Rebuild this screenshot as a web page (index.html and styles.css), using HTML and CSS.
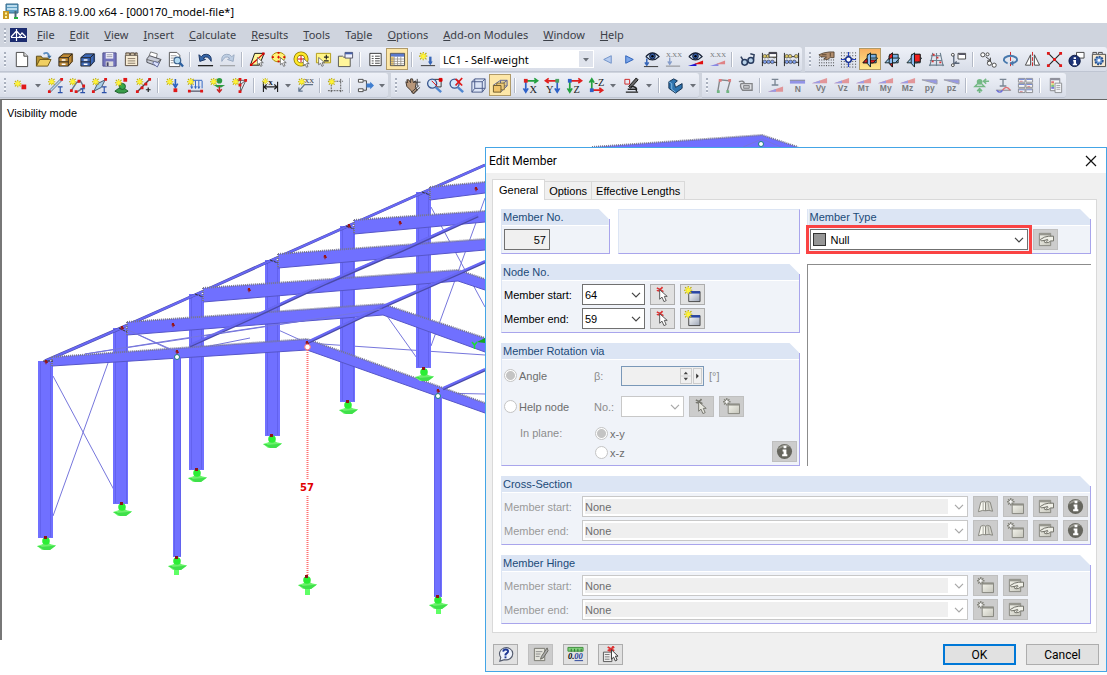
FILE: index.html
```
<!DOCTYPE html>
<html lang="en">
<head>
<meta charset="utf-8">
<title>RSTAB 8.19.00 x64 - [000170_model-file*]</title>
<link rel="stylesheet" href="styles.css">
</head>
<body>
<svg class="defs" aria-hidden="true">
  <defs>
    <linearGradient id="gsteel" x1="0" y1="0" x2="1" y2="1"><stop offset="0" stop-color="#fff"/><stop offset="1" stop-color="#9aa3b5"/></linearGradient>
    <linearGradient id="gpaper" x1="0" y1="0" x2="1" y2="1"><stop offset="0" stop-color="#f6f6ee"/><stop offset="1" stop-color="#c4c4ba"/></linearGradient>
    <symbol id="star" viewBox="0 0 8 8"><path d="M4 0v8M0 4h8M1 1l6 6M7 1L1 7" stroke="#b8a800" stroke-width="1.1"/><path d="M4 1v6M1 4h6M2 2l4 4M6 2L2 6" stroke="#fff43a" stroke-width="1.1"/></symbol>
    <symbol id="cursor" viewBox="0 0 10 14"><path d="M1 1v10l2.6-2.2L5.4 13l2-.9-1.800-4H9z" fill="#fff" stroke="#555"/></symbol>
    <symbol id="down" viewBox="0 0 8 8"><path d="M1 3h6L4 6.400z" fill="#6b7078"/></symbol>
    <symbol id="chev" viewBox="0 0 10 6"><path d="M1 .8l4 4 4-4" fill="none" stroke="currentColor" stroke-width="1.2"/></symbol>
    <symbol id="cabinet" viewBox="0 0 18 18"><path d="M2 7l5-5h10l-4 5z" fill="#fff" fill-opacity=".35"/><path d="M2 7h10v9H2zM2 7l5-4h9l-4 4M12 7l4-4v8l-4 5" stroke="#222" stroke-width=".9"/><path d="M2 11.500h10" stroke="#222"/><path d="M5 9.500h4M5 14h4" stroke="#fff" stroke-width="1.4"/></symbol>
    <symbol id="pick" viewBox="0 0 18 18"><path d="M3 2l7 4M9 1L5 6M3 5l6-3" stroke="#d33" stroke-width="1.700"/><path d="M6 4v10l2.500-2.200L10.500 16.500l2.400-1-2-4.500H14z" fill="#fff" stroke="#555"/></symbol>
    <symbol id="newwin" viewBox="0 0 18 18"><path d="M5 6h12v10.500H5z" fill="url(#gsteel)" stroke="#444"/><path d="M5 5.500h12v2.500H5z" fill="#2745a8"/><use href="#star" x="0" y="0" width="9" height="9"/></symbol>
    <symbol id="pick-off" viewBox="0 0 18 18"><path d="M3 2l7 4M9 1L5 6M3 5l6-3" stroke="#77776f" stroke-width="1.600"/><path d="M6 4v10l2.500-2.200L10.500 16.500l2.400-1-2-4.500H14z" fill="#e8e8e0" stroke="#74746c"/></symbol>
    <symbol id="newwin-off" viewBox="0 0 18 18"><path d="M5.500 6.500h12v10h-12z" fill="url(#gpaper)" stroke="#84847c"/><path d="M5 7h13" stroke="#909088" stroke-width="2"/><path d="M4 0v8M0 4h8M1.200 1.200l5.600 5.600M6.800 1.200L1.200 6.800" stroke="#85857d" stroke-width="1.500"/><path d="M4 2v4M2 4h4" stroke="#fff" stroke-width="1.300"/></symbol>
    <symbol id="editwin-off" viewBox="0 0 18 18"><path d="M2.500 2.500h12v13h-12z" fill="url(#gpaper)" stroke="#85857d"/><path d="M2.500 3.500h12" stroke="#96968e" stroke-width="2.200"/><path d="M17.500 5.500h-5L8 6.500 3.500 9l1 1.500 4-.7-1 1.700 2 1 3-.5 2-1.500h3z" fill="#f0f0e8" stroke="#6c6c64"/><path d="M8.500 9.800l3-1M9.500 11l2.500-1" stroke="#6c6c64" fill="none"/></symbol>
    <symbol id="book-off" viewBox="0 0 18 18"><path d="M1.500 14.500L4 4.500q3-2 5 0v9q-3-1-7.500 1z" fill="#fafaf2" stroke="#84847c"/><path d="M9 13.500v-9q2-2 5 0l2.500 9.500q-4-1.500-7.500-.5z" fill="#d6d6ce" stroke="#84847c"/><path d="M6.500 4v9M11.500 4l1.500 9" stroke="#a4a49c"/></symbol>
    <symbol id="info-off" viewBox="0 0 18 18"><circle cx="9" cy="9" r="8" fill="#66665e"/><path d="M2 7a8 8 0 0 1 13-3q-7-1-13 3" fill="#9a9a92"/><path d="M8 3h3v2.500H8zM7 7h4v5h1v2H6.500v-2H8V9H7z" fill="#fff"/></symbol>
    <symbol id="eye" viewBox="0 0 18 18"><path d="M2 6q7-8 14 0-7 7-14 0" fill="#cfe2f6" stroke="#172034" stroke-width="1.300"/><circle cx="9" cy="5.500" r="3" fill="#3560ae" stroke="#101a33"/><circle cx="9" cy="5.500" r="1.300"/></symbol>
    <symbol id="diag" viewBox="0 0 18 18"><path d="M1 6.500h16V1z" fill="#e06060"/><path d="M1 6.500h8.500V3.700z" fill="#6a6ae0"/></symbol>
    <symbol id="diag2" viewBox="0 0 18 18"><path d="M1 2h16v4.500z" fill="#6262e0" stroke="#70707a"/></symbol>
    <symbol id="planes" viewBox="0 0 18 18"><path d="M6 3.500h9v9H6z" fill="#79ade0" stroke="#122"/><path d="M1 12.500l4.500-5h11l-4.500 5z" fill="#9cc8f0" stroke="#122"/><path d="M9 2v15l-3.500-4V5z" fill="#8cbcf0" stroke="#122"/></symbol>
    <symbol id="abacus" viewBox="0 0 18 18"><path d="M1.500 2v14M16.500 2v14M1 6h16M1 12h16" stroke="#222"/><g stroke="#333" stroke-width=".6"><g fill="#dcc96a"><circle cx="4" cy="5.500" r="1.900"/><circle cx="7.500" cy="5.500" r="1.900"/><circle cx="14" cy="5.500" r="1.900"/></g><g fill="#7d9dec"><circle cx="4" cy="11.500" r="1.900"/><circle cx="8" cy="11.500" r="1.900"/><circle cx="12" cy="11.500" r="1.900"/></g></g></symbol>
    <g id="support"><path d="M-9 4L0 1l10 2.500L4 8h-8z" fill="#7dff7d"/><path d="M-9 4l7 4h6l6-4.500z" fill="#3fe04a"/><path d="M-5 5L-2 0h4l4 4z" fill="#6bf06b"/><circle cy="-1" r="3.800" fill="#2bee34"/><path d="M-2-6h3v3h-3z" fill="#8d1515"/></g>
    <path id="node" d="M-1-2h2v1.500h.8v1.500h-1.300v1.200h-1v-1.700h-1z" fill="#981515"/>
  </defs>
</svg>

<header class="titlebar">
  <svg class="app-icon" viewBox="0 0 17 17"><path d="M4 1h12v9H4z" fill="#5f9fc4" stroke="#376b8b"/><path d="M5 3h10M5 6h10" stroke="#d9f1fc" stroke-width="1.500"/><path d="M13.500 8v6" stroke="#486875" stroke-width="2"/><path d="M12 14h4v2h-4z" fill="#27b13e"/><path d="M1 8h6v8H1z" fill="#c99a23"/><path d="M3 9.500h2v2H3zM3 13h2v2H3z" fill="#fff4a0"/></svg>
  <h1>RSTAB 8.19.00 x64 - [000170_model-file*]</h1>
</header>

<nav class="menubar" aria-label="Main menu">
  <span class="grip"></span>
  <svg class="menu-logo" viewBox="0 0 17 14"><path d="M0 0h17v14H0z" fill="#1d2d70"/><path d="M1 9.500h15M6.500 1v12M1 9l5.500-6L12 9M9 9l3-4 4 4" stroke="#fff" stroke-width="1.200" fill="none"/></svg>
  <button><u>F</u>ile</button><button><u>E</u>dit</button><button><u>V</u>iew</button><button><u>I</u>nsert</button><button><u>C</u>alculate</button><button><u>R</u>esults</button><button><u>T</u>ools</button><button>Ta<u>b</u>le</button><button><u>O</u>ptions</button><button><u>A</u>dd-on Modules</button><button><u>W</u>indow</button><button><u>H</u>elp</button>
</nav>

<div class="toolrow">
  <div class="toolbar" role="toolbar" aria-label="Standard">
    <span class="grip"></span>
    <button class="tb" aria-label="New"><svg viewBox="0 0 18 18"><path d="M3.500 1.500h8l4 4v11h-12z" fill="#fff" stroke="#444"/><path d="M11.500 1.500v4h4" fill="#ddd" stroke="#444"/></svg></button>
    <button class="tb" aria-label="Open"><svg viewBox="0 0 18 18"><path d="M1.500 16V5.500h5l1.500 2h6V10" fill="#b89433" stroke="#5c4a14"/><path d="M1.500 16l3.500-7h12l-3.500 7z" fill="#f0cf62" stroke="#6b5415"/><path d="M9 3q5-3 6 3" fill="none" stroke="#5c8ec0" stroke-width="2"/><path d="M13 5h4.500L15 8.500z" fill="#3d6ea0"/></svg></button>
    <button class="tb" aria-label="Project manager"><svg viewBox="0 0 18 18" fill="#c08a34"><path d="M2 7l4-4h11v8l-5 5H2z"/><use href="#cabinet"/></svg></button>
    <button class="tb" aria-label="Block manager"><svg viewBox="0 0 18 18" fill="#3c68b8"><path d="M2 7l4-4h11v8l-5 5H2z"/><use href="#cabinet"/></svg></button>
    <button class="tb" aria-label="Save"><svg viewBox="0 0 18 18"><path d="M2 2h14v14H2z" fill="#7374bd" stroke="#50508a"/><path d="M5 2h8v6H5z" fill="#f4f4fa"/><path d="M6 4h6M6 6h6" stroke="#99a"/><path d="M5 11h8v5H5z" fill="#ddd"/><path d="M6 12h2v4H6z" fill="#446"/></svg></button>
    <button class="tb" aria-label="Report"><svg viewBox="0 0 18 18"><path d="M2.500 4.500h13v11h-13z" fill="#f7ecd5" stroke="#54483c"/><path d="M3 4V2h4v2h1V2h4v2h1V2h2v2" fill="#ccb99b" stroke="#54483c"/><path d="M5 8h8M5 10.500h8M5 13h8" stroke="#887a68"/></svg></button>
    <button class="tb" aria-label="Print"><svg viewBox="0 0 18 18"><path d="M4 6l2-5 7 2-1 5z" fill="#fff" stroke="#777"/><path d="M2 8l3-3 12 4-4 7-11-4z" fill="#c9cdd8" stroke="#4b4d55"/><path d="M2 9l11 3 4-3" fill="none" stroke="#666"/><path d="M8 13l2-2 5 2-2 4z" fill="#d9dffc" stroke="#6670a0"/></svg></button>
    <button class="tb" aria-label="Print preview"><svg viewBox="0 0 18 18"><path d="M2.500 1.500h8l3 3v12h-11z" fill="#fff" stroke="#555"/><path d="M4 5h6M4 7.500h6M4 10h3M4 12.500h3" stroke="#999"/><circle cx="11" cy="10" r="3.500" fill="#b4dcf2" stroke="#3e638c" stroke-width="1.300"/><path d="M13.500 12.500l3.500 4" stroke="#2b5fa0" stroke-width="2.400"/></svg></button>
    <span class="sep"></span>
    <button class="tb" aria-label="Undo"><svg viewBox="0 0 18 18"><path d="M2 4l1 7 6-2-2.500-1.200Q11 3.500 15 11q1-7-5-7.500Q6.500 3 4.500 6z" fill="#3767a8" stroke="#1c3562"/><path d="M1 15.500h16" stroke="#222" stroke-width="1.400"/></svg></button>
    <button class="tb" aria-label="Redo"><svg viewBox="0 0 18 18" opacity=".55"><path d="M16 4l-1 7-6-2 2.500-1.200Q7 3.500 3 11q-1-7 5-7.500 3.500-.5 5.500 2.500z" fill="#9fb9d8" stroke="#5e789b"/><path d="M1 15.500h16" stroke="#777" stroke-width="1.400"/></svg></button>
    <span class="sep"></span>
    <button class="tb" aria-label="Select by parallelogram"><svg viewBox="0 0 18 18"><path d="M6 2.500h10L11 15H1.500z" fill="#fff79a" stroke="#111"/><path d="M2 15L15 3" stroke="#d60000" stroke-width="1.300"/><path d="M1 13.500h2.500v2.500H1zM14 1.500h2.500V4H14z" fill="#d60000"/><use href="#cursor" x="8" y="6" width="8" height="11"/></svg></button>
    <button class="tb" aria-label="Select by ellipse"><svg viewBox="0 0 18 18"><ellipse cx="8" cy="6.500" rx="7" ry="5" fill="#fff27a" stroke="#a88c00"/><path d="M8 1v2M8 10v2M1 6.500h2M13 6.500h2" stroke="#d00" stroke-width="2"/><path d="M8 5v3M6.500 6.500h3" stroke="#d00"/><use href="#cursor" x="9" y="6" width="8" height="11"/></svg></button>
    <button class="tb" aria-label="Select by ring"><svg viewBox="0 0 18 18"><circle cx="8.500" cy="8.500" r="5.800" fill="#fff" stroke="#927d00" stroke-width="4.400"/><circle cx="8.500" cy="8.500" r="5.800" fill="none" stroke="#ffe92a" stroke-width="2.600"/><path d="M8.500 5v7M5 8.500h7" stroke="#d00"/><use href="#cursor" x="10" y="7" width="8" height="11"/></svg></button>
    <button class="tb" aria-label="Add to selection"><svg viewBox="0 0 18 18"><path d="M1.500 2.500h15v10h-15z" fill="#fff587" stroke="#b49b15"/><path d="M12 4v5M9.500 6.500h5M9.500 10.500h5" stroke="#222" stroke-width="1.200"/><use href="#cursor" x="3" y="6" width="8" height="11"/></svg></button>
    <button class="tb" aria-label="Visibilities"><svg viewBox="0 0 18 18"><path d="M1.500 16.500v-11H6l1 1h7v10z" fill="#fff59a" stroke="#555"/><path d="M8.500 1.500h8v6h-8z" fill="#eef1ff" stroke="#556"/><path d="M8.500 2.500h8" stroke="#4560a8" stroke-width="2"/></svg></button>
    <span class="sep"></span>
    <button class="tb" aria-label="Tables"><svg viewBox="0 0 18 18"><path d="M3 2.500h12v13H3z" fill="#fff" stroke="#333"/><path d="M5 5.500h2M5 8h2M5 10.500h2M5 13h2M8.500 5.500h5M8.500 8h5M8.500 10.500h5M8.500 13h5" stroke="#444"/></svg></button>
    <button class="tb on" aria-label="Table view"><svg viewBox="0 0 18 18"><path d="M1.500 2.500h15v13h-15z" fill="#fff" stroke="#444"/><path d="M2 3h14v3H2z" fill="#5b79cc"/><path d="M2 6h3v9H2z" fill="#edc86a"/><path d="M2 8.500h14M2 11h14M2 13.500h14M5.500 6v9M9 6v9M12.500 6v9" stroke="#918a82" stroke-width=".8"/></svg></button>
    <span class="sep"></span>
    <button class="tb" aria-label="New load case"><svg viewBox="0 0 18 18"><use href="#star" x="0" y="1" width="9" height="9"/><path d="M12 6v7" stroke="#3565b8" stroke-width="2.500"/><path d="M9.500 11h5L12 15z" fill="#3565b8"/><path d="M2 15.500h15" stroke="#333"/></svg></button>
    <span class="picker lc"><select aria-label="Load case"><option>LC1 - Self-weight</option></select><span class="lc-arrow"><svg viewBox="0 0 8 8"><use href="#down"/></svg></span></span>
    <button class="tb" aria-label="Previous load case"><svg viewBox="0 0 18 18"><path d="M13 5v8L5 9z" fill="#b6ccf0" stroke="#6e90c8"/></svg></button>
    <button class="tb" aria-label="Next load case"><svg viewBox="0 0 18 18"><path d="M5 5v8l8-4z" fill="#7aa6ea" stroke="#2b5fb8"/></svg></button>
    <button class="tb" aria-label="Show loads"><svg viewBox="0 0 18 18"><use href="#eye" x="1"/><path d="M4 8v6M2 12l2 3 2-3" stroke="#3565b8" stroke-width="1.600" fill="none"/><path d="M1 16.500h15" stroke="#333"/></svg></button>
    <button class="tb" aria-label="Show load values"><svg viewBox="0 0 18 18" opacity=".65"><text class="mini" x="1" y="6">X.XX</text><path d="M5 7v6M3 11l2 3 2-3" stroke="#5577b8" stroke-width="1.400" fill="none"/><path d="M1 16h15" stroke="#555"/></svg></button>
    <button class="tb" aria-label="Show results"><svg viewBox="0 0 18 18"><use href="#eye"/><path d="M1 16h9v-3z" fill="#1616d8"/><path d="M7 14l10-4v4z" fill="#e01010"/></svg></button>
    <button class="tb" aria-label="Show result values"><svg viewBox="0 0 18 18" opacity=".65"><text class="mini" x="1" y="6">X.XX</text><path d="M1 16h9v-3z" fill="#5a5ae0"/><path d="M7 14l10-4v4z" fill="#e05050"/></svg></button>
    <span class="sep"></span>
    <button class="tb" aria-label="Glasses"><svg viewBox="0 0 18 18"><path d="M2 6q2 4 4 5M12 3l4 1-1 7" stroke="#30405e" stroke-width="1.600" fill="none"/><circle cx="6" cy="12" r="3" fill="#b7d1e8" stroke="#273a5e" stroke-width="1.600"/><circle cx="12.500" cy="10" r="3" fill="#b7d1e8" stroke="#273a5e" stroke-width="1.600"/></svg></button>
    <button class="tb" aria-label="Calculation parameters"><svg viewBox="0 0 18 18"><use href="#abacus"/><path d="M8.500 1.500h8v5h-8z" fill="#fff" stroke="#333"/><path d="M8.500 2.500h8" stroke="#445" stroke-width="1.500"/></svg></button>
    <button class="tb" aria-label="Calculate"><svg viewBox="0 0 18 18"><use href="#abacus"/></svg></button>
  </div>
  <div class="toolbar grow" role="toolbar" aria-label="Guides">
    <span class="grip"></span>
    <button class="tb" aria-label="Grid settings"><svg viewBox="0 0 18 18"><path d="M1 9.500h16M1 12.500h16M1 15.500h16M1 6.500h4" stroke="#333" stroke-dasharray="1 1.500"/><path d="M12 1h5v6h-4l-3 2-4-.5 3-2-6-.5L1 4l5-2z" fill="#b08d6e" stroke="#40301f" stroke-width=".8"/><path d="M4 4h5M13 2v4" stroke="#40301f" stroke-width=".8"/></svg></button>
    <button class="tb" aria-label="Snap"><svg viewBox="0 0 18 18"><path d="M1 2h16M1 5h16M1 8h16M1 11h16M1 14h16M1 17h16" stroke="#333" stroke-dasharray="1 2"/><path d="M9 1v16M1 9h16" stroke="#2440c0" stroke-width="1.200"/><circle cx="9" cy="9" r="3" fill="#fff" stroke="#102a8a" stroke-width="1.500"/></svg></button>
    <button class="tb hot" aria-label="Work plane XY"><svg viewBox="0 0 18 18"><use href="#planes"/><path d="M1 12.500l3.500-4h1v4z" fill="#e02020" stroke="#111" stroke-width=".8"/><path d="M9 12.500v-3h6l-3 3z" fill="#e02020" stroke="#111" stroke-width=".8"/></svg></button>
    <button class="tb" aria-label="Work plane YZ"><svg viewBox="0 0 18 18"><use href="#planes"/><path d="M9 2v5.500H7L5.500 9V5zM9 13v4l-3-3.500z" fill="#e02020" stroke="#111" stroke-width=".8"/></svg></button>
    <button class="tb" aria-label="Work plane XZ"><svg viewBox="0 0 18 18"><use href="#planes"/><path d="M9 3.500h6v8H9z" fill="#f02020" stroke="#111" stroke-width=".8"/></svg></button>
    <button class="tb" aria-label="Line grid"><svg viewBox="0 0 18 18"><path d="M5 2L2 16M9 2v14M13 2l3 14M3 5h11M2 10h13M1 15h16" stroke="#6d8190" stroke-width="1.200"/><path d="M5 3h2v2H5zM9 6h2v2H9zM12 11h2v2h-2zM4 10h2v2H4z" fill="#d83434"/></svg></button>
    <button class="tb" aria-label="Object properties"><svg viewBox="0 0 18 18"><path d="M8.500 2.500h8v6h-8z" fill="#fff" stroke="#444"/><path d="M9 3.500h7" stroke="#556" stroke-width="1.500"/><path d="M4 4v9h6M2 16l5-5" stroke="#596579" stroke-width="1.400" fill="none"/><circle cx="3" cy="4" r="1.500" fill="#fff" stroke="#444"/><circle cx="3" cy="15" r="1.500" fill="#fff" stroke="#444"/></svg></button>
    <span class="sep"></span>
    <button class="tb" aria-label="Copy"><svg viewBox="0 0 18 18"><circle cx="3" cy="4" r="2.200" fill="#fff" stroke="#444"/><circle cx="8" cy="3.500" r="1.600" fill="#fff" stroke="#444"/><path d="M6 6l5 4M11 7v3.500H7.500" stroke="#333" fill="none"/><circle cx="10" cy="13" r="2.200" fill="#fff" stroke="#444"/><circle cx="15" cy="15" r="2.200" fill="#fff" stroke="#444"/></svg></button>
    <button class="tb" aria-label="Rotate"><svg viewBox="0 0 18 18"><path d="M9 1v16" stroke="#d02020" stroke-dasharray="4 1.500"/><path d="M6 13Q0 11 3 7q6-4 12 0 3 4-4 6" stroke="#4879ad" stroke-width="2" fill="none"/><path d="M12 10v6l-4-3z" fill="#4879ad"/></svg></button>
    <button class="tb" aria-label="Mirror"><svg viewBox="0 0 18 18"><path d="M9 1v16" stroke="#d02020" stroke-dasharray="4 1.500"/><path d="M7 4v11H1.500zM11 4v11h5.500z" fill="#fff" stroke="#444"/></svg></button>
    <button class="tb" aria-label="Intersect"><svg viewBox="0 0 18 18"><path d="M2 2l14 14M16 2L2 16" stroke="#222" stroke-width="1.200"/><path d="M1 1h3v3H1zM14 1h3v3h-3zM1 14h3v3H1zM14 14h3v3h-3zM7.500 7.500h3v3h-3z" fill="#e01818"/></svg></button>
    <button class="tb" aria-label="Info"><svg viewBox="0 0 18 18"><path d="M9 1.500h8v6H9z" fill="#fff" stroke="#444"/><circle cx="7" cy="10.500" r="6" fill="#1c3376" stroke="#0d1a42"/><path d="M6 6.500h2.500V8.500H6zM5.500 9.500h3v4h1V15H5v-1.500h1V11h-.5z" fill="#fff"/></svg></button>
    <button class="tb" aria-label="Settings"><svg viewBox="0 0 18 18"><path d="M2.500 3.500h14v13h-14z" fill="#f6e9d2" stroke="#444"/><path d="M3 3V1.500h4V3m2 0V1.500h4V3" stroke="#444" fill="none"/><circle cx="9.500" cy="10" r="4" fill="#6a97d4" stroke="#27508c" stroke-width="2" stroke-dasharray="2 1"/><circle cx="9.500" cy="10" r="1.500" fill="#fff"/></svg></button>
  </div>
</div>

<div class="toolrow">
  <div class="toolbar" role="toolbar" aria-label="Insert">
    <span class="grip"></span>
    <button class="tb" aria-label="New node"><svg viewBox="0 0 18 18"><use href="#star" x="1" y="3" width="8" height="8"/><path d="M9 8h5v5H9z" fill="#e01818"/></svg></button>
    <button class="drop" aria-label="More node options"><svg viewBox="0 0 8 8"><use href="#down"/></svg></button>
    <button class="tb" aria-label="New member"><svg viewBox="0 0 18 18"><path d="M3 15L15 3" stroke="#678" stroke-width="3"/><path d="M3 15L15 3" stroke="#b6d4ec" stroke-width="1.600"/><path d="M1 14h3v3H1zM14 1h3v3h-3z" fill="#e01818"/><use href="#star" x="1" y="1" width="8" height="8"/><path d="M11.500 10.500h5M11.500 16.500h5M14 10v7" stroke="#2b50a8" stroke-width="1.200"/></svg></button>
    <button class="tb" aria-label="New polyline member"><svg viewBox="0 0 18 18"><path d="M2 15l6-9 4-2 4 7-8 5" stroke="#678" stroke-width="1.500" fill="none"/><path d="M1 13h3v3H1zM9 3h3v3H9zM14 8h3v3h-3zM6 14h3v3H6z" fill="#e01818"/><use href="#star" x="0" y="1" width="8" height="8"/><path d="M12 12.500h5M12 16.500h5M14.500 12v5" stroke="#2b50a8" stroke-width="1.200"/></svg></button>
    <button class="tb" aria-label="New set of members"><svg viewBox="0 0 18 18"><path d="M3 15L7 7l8-4-4 8z" fill="#a7ceea" stroke="#456"/><path d="M1 14h3v3H1zM14 1h3v3h-3z" fill="#e01818"/><use href="#star" x="1" y="1" width="8" height="8"/><path d="M11.500 10.500h5M11.500 16.500h5M14 10v7" stroke="#2b50a8" stroke-width="1.200"/></svg></button>
    <button class="tb" aria-label="New support"><svg viewBox="0 0 18 18"><path d="M2 15l4-3h6l4 3-4 2H6z" fill="#3a9c4a" stroke="#1c5c28"/><circle cx="10" cy="10" r="3.200" fill="#35a848" stroke="#1c5c28"/><path d="M11 1h4v4h-4z" fill="#e01818"/><use href="#star" x="2" y="2" width="8" height="8"/></svg></button>
    <button class="tb" aria-label="Divide member"><svg viewBox="0 0 18 18"><path d="M3 15L15 3" stroke="#444" stroke-width="1.500"/><path d="M1 14h3v3H1zM14 1h3v3h-3zM10 6h3v3h-3zM6 10h3v3H6z" fill="#e01818"/><use href="#star" x="1" y="1" width="8" height="8"/><path d="M14 11v5M11.500 13.500h5" stroke="#222" stroke-width="1.300"/></svg></button>
    <span class="sep"></span>
    <button class="tb" aria-label="Nodal load"><svg viewBox="0 0 18 18"><path d="M11 2v7M8.500 7l2.500 4 2.500-4" stroke="#2b62c0" stroke-width="1.700" fill="none"/><path d="M9 12h4v4H9z" fill="#e01818"/><use href="#star" x="1" y="1" width="8" height="8"/></svg></button>
    <button class="tb" aria-label="Member load"><svg viewBox="0 0 18 18"><path d="M5 3.500h11M5 4v8M9 4v8M12.500 4v8M16 4v8M4 10l1 2 1-2M8 10l1 2 1-2M11.500 10l1 2 1-2" stroke="#2b62c0" fill="none"/><path d="M2 15h15" stroke="#667" stroke-width="1.500"/><path d="M1 13.500h3v3H1zM14 13.500h3v3h-3z" fill="#e01818"/><use href="#star" x="0" y="1" width="8" height="8"/></svg></button>
    <button class="tb" aria-label="Imposed displacement"><svg viewBox="0 0 18 18"><circle cx="11" cy="4" r="3" fill="#2d9a42"/><path d="M5 8.500h12l-4 2.500H9z" fill="#2d9a42"/><path d="M11 10v6M8.500 13l2.500 3 2.500-3" stroke="#c72828" stroke-width="1.600" fill="none"/><use href="#star" x="1" y="1" width="8" height="8"/></svg></button>
    <button class="tb" aria-label="Free load"><svg viewBox="0 0 18 18"><path d="M10 2v14M10 16l6-13M10 8l5-4M6 3.500h10" stroke="#555" fill="none"/><path d="M8 1h3v3H8zM14 2h3v3h-3zM8 14h3v3H8zM8 7h3v3H8z" fill="#e01818"/><use href="#star" x="1" y="1" width="8" height="8"/></svg></button>
    <span class="sep"></span>
    <button class="tb wide" aria-label="Dimension"><svg viewBox="0 0 18 18"><path d="M1.500 5v11M16.500 5v11M2 10.500h14M5 8l-3 2.500L5 13M13 8l3 2.500-3 2.500" stroke="#222" stroke-width="1.200" fill="none"/><text class="glyph" x="7" y="8">x</text><use href="#star" x="0" y="1" width="7" height="7"/></svg></button>
    <button class="drop" aria-label="More dimension options"><svg viewBox="0 0 8 8"><use href="#down"/></svg></button>
    <button class="tb" aria-label="Comment"><svg viewBox="0 0 18 18"><path d="M2 15l6-7h9M2 11v4h4" stroke="#5f738c" stroke-width="1.300" fill="none"/><text class="mini" x="8" y="6">XX</text><use href="#star" x="1" y="1" width="8" height="8"/></svg></button>
    <span class="sep"></span>
    <button class="tb" aria-label="Guideline"><svg viewBox="0 0 18 18"><path d="M4.500 2v15M14.500 2v15M1 4.500h16M1 14.500h16" stroke="#555" stroke-dasharray="2 1"/><use href="#star" x="1" y="1" width="8" height="8"/></svg></button>
    <span class="sep"></span>
    <button class="tb" aria-label="Generate"><svg viewBox="0 0 18 18"><path d="M1.500 2.500h5v3h-5zM1.500 12.500h5v3h-5z" fill="#fff" stroke="#444"/><path d="M7 4h3v10H7" stroke="#444" fill="none"/><path d="M10 7h4V5l4 4-4 4v-2h-4z" fill="#3f7ed0"/></svg></button>
    <button class="drop" aria-label="More generators"><svg viewBox="0 0 8 8"><use href="#down"/></svg></button>
  </div>
  <div class="toolbar" role="toolbar" aria-label="View">
    <span class="grip"></span>
    <button class="tb" aria-label="Pan"><svg viewBox="0 0 18 18"><path d="M2 5l2 1-1-3 2 0 2 3 0-4 2 0 1 4 2-2 1 2-1 5 2 3-4 4-3-4-4-4z" fill="#b8977a" stroke="#3b3026"/><path d="M14 2v8M10.500 5.500h7M8 16l8-7M10 17l7-6" stroke="#3a3a3a"/></svg></button>
    <button class="tb" aria-label="Zoom window"><svg viewBox="0 0 18 18"><path d="M8 2.500h8v8H8z" fill="none" stroke="#333"/><circle cx="6.500" cy="7" r="4.800" fill="#d4e8fa" stroke="#3a568e" stroke-width="1.400"/><path d="M10.500 11l5.500 5" stroke="#4f86d0" stroke-width="2.600"/><path d="M6 4l6 6M14 1.500h3v3h-3z" stroke="#d00" fill="#d00"/></svg></button>
    <button class="tb" aria-label="Zoom all"><svg viewBox="0 0 18 18"><circle cx="7" cy="7" r="4.800" fill="#d4e8fa" stroke="#3a568e" stroke-width="1.400"/><path d="M10.500 11l5.500 5" stroke="#4f86d0" stroke-width="2.600"/><path d="M8 2l7 7M15 1L8 9" stroke="#e01818" stroke-width="1.800"/></svg></button>
    <button class="tb" aria-label="Isometric"><svg viewBox="0 0 18 18"><path d="M2 5l3-3h11v10l-3 4H2z" fill="#dce5f6" stroke="#4a5a88"/><path d="M2 5h11v11M13 5l3-3M5 2v10l-3 4M5 12h11" fill="none" stroke="#4a5a88"/></svg></button>
    <button class="tb on" aria-label="Perspective"><svg viewBox="0 0 18 18"><path d="M9 3.500h7v6H9z" fill="#e4cf92" stroke="#5c6496"/><path d="M1 9l8-5.500M9 9l7-5.500M9 16l7-6.500" stroke="#5c6496"/><path d="M5 6.500h8v7H5z" fill="#ecc97a" stroke="#6d5928" stroke-width=".8"/><path d="M1.500 9h8v7h-8z" fill="#f0c46a" stroke="#6d5928"/></svg></button>
    <span class="sep"></span>
    <button class="tb" aria-label="View in X"><svg viewBox="0 0 18 18"><path d="M4 4h12M13 1.500L16.500 4 13 6.500" stroke="#24a040" stroke-width="1.800" fill="none"/><path d="M4 4v11M1.500 12L4 16l2.500-4" stroke="#2f62c8" stroke-width="1.800" fill="none"/><path d="M2 2h4v4H2z" fill="#e02020"/><text class="axis" x="8" y="17">X</text></svg></button>
    <button class="tb" aria-label="View in Y"><svg viewBox="0 0 18 18"><path d="M14 4H2M5 1.500L1.500 4 5 6.500" stroke="#e02020" stroke-width="1.800" fill="none"/><path d="M14 4v11M11.500 12l2.500 4 2.500-4" stroke="#2f62c8" stroke-width="1.800" fill="none"/><path d="M12 2h4v4h-4z" fill="#4aa060"/><text class="axis" x="2" y="17">Y</text></svg></button>
    <button class="tb" aria-label="View in Z"><svg viewBox="0 0 18 18"><path d="M4 4h12M13 1.500L16.500 4 13 6.500" stroke="#e02020" stroke-width="1.800" fill="none"/><path d="M4 4v11M1.500 12L4 16l2.500-4" stroke="#24a040" stroke-width="1.800" fill="none"/><path d="M2 2h4v4H2z" fill="#2f62c8"/><text class="axis" x="8" y="17">Z</text></svg></button>
    <button class="tb" aria-label="View against Z"><svg viewBox="0 0 18 18"><path d="M4 13V3M1.500 6L4 2l2.500 4" stroke="#24a040" stroke-width="1.800" fill="none"/><path d="M4 14h11M12 11.500l3.500 2.500-3.500 2.500" stroke="#e02020" stroke-width="1.800" fill="none"/><path d="M2 12h4v4H2z" fill="#2f62c8"/><text class="axis" x="7" y="9">-Z</text></svg></button>
    <button class="drop" aria-label="More views"><svg viewBox="0 0 8 8"><use href="#down"/></svg></button>
    <button class="tb wide" aria-label="View by member"><svg viewBox="0 0 18 18"><path d="M2 2.500h5v5H2z" fill="none" stroke="#c22"/><path d="M14 1l2 2-8 9-2-2z" fill="#666" stroke="#111"/><path d="M5 13h10M3 16h13M8 10q8 0 6 5" stroke="#222" stroke-width="1.500" fill="none"/></svg></button>
    <button class="drop" aria-label="More view options"><svg viewBox="0 0 8 8"><use href="#down"/></svg></button>
    <span class="sep"></span>
    <button class="tb wide" aria-label="Rendering"><svg viewBox="0 0 18 18"><path d="M2 5l5-3 4 2-3 3 1 4 7-4v5l-7 5-7-5z" fill="#2f73ae" stroke="#0e2d4c"/><path d="M2 5l3 2v6l4 3" stroke="#83bce6" fill="none"/></svg></button>
    <button class="drop" aria-label="More rendering options"><svg viewBox="0 0 8 8"><use href="#down"/></svg></button>
  </div>
  <div class="toolbar" role="toolbar" aria-label="Results">
    <span class="grip"></span>
    <button class="tb off" aria-label="Deformation"><svg viewBox="0 0 18 18"><path d="M3 15L5 3l11 1-3 11" stroke="#444" stroke-width="1.400" fill="none"/><path d="M2 14h3v3H2zM12 14h3v3h-3z" fill="#2a9a3e"/><path d="M4 2h3v3H4zM14 2h3v3h-3z" fill="#d33"/></svg></button>
    <button class="tb off" aria-label="Sections"><svg viewBox="0 0 18 18"><path d="M2 5q5-2 6 2M4 7h12v7H6q-3-3-2-7" fill="#ddd" stroke="#444" stroke-width="1.400"/><path d="M7 9h6v3H7z" fill="#aaa" stroke="#444"/></svg></button>
    <span class="sep"></span>
    <button class="tb off" aria-label="Results diagram"><svg viewBox="0 0 18 18"><path d="M5 2.500h7M5 8.500h7M8.500 2v7" stroke="#345" stroke-width="1.400"/><use href="#diag" y="9"/></svg></button>
    <button class="tb off" aria-label="N"><svg viewBox="0 0 18 18"><path d="M1 3h16v4H1z" fill="#5b5be0"/><path d="M1 3.500h16" stroke="#555"/><text class="force" x="6" y="16">N</text></svg></button>
    <button class="tb off" aria-label="Vy"><svg viewBox="0 0 18 18"><use href="#diag"/><text class="force" x="5" y="15">Vy</text></svg></button>
    <button class="tb off" aria-label="Vz"><svg viewBox="0 0 18 18"><use href="#diag"/><text class="force" x="5" y="15">Vz</text></svg></button>
    <button class="tb off" aria-label="MT"><svg viewBox="0 0 18 18"><use href="#diag"/><text class="force" x="3" y="15">Mт</text></svg></button>
    <button class="tb off" aria-label="My"><svg viewBox="0 0 18 18"><use href="#diag"/><text class="force" x="3" y="15">My</text></svg></button>
    <button class="tb off" aria-label="Mz"><svg viewBox="0 0 18 18"><use href="#diag"/><text class="force" x="3" y="15">Mz</text></svg></button>
    <button class="tb off" aria-label="py"><svg viewBox="0 0 18 18"><use href="#diag2" y="1"/><text class="force" x="4" y="15">py</text></svg></button>
    <button class="tb off" aria-label="pz"><svg viewBox="0 0 18 18"><use href="#diag2" y="1"/><text class="force" x="4" y="15">pz</text></svg></button>
    <span class="sep"></span>
    <button class="tb off" aria-label="Support reactions"><svg viewBox="0 0 18 18"><circle cx="7" cy="5" r="3" fill="#2a9a3e"/><path d="M2 10l3-3h4l3 3zM11 4.500h6M14 2l-3 2.500L14 7" stroke="#2a9a3e" stroke-width="1.500" fill="none"/><path d="M7 17v-4M4.500 15L7 12.500 9.500 15" stroke="#2a9a3e" stroke-width="1.800" fill="none"/></svg></button>
    <button class="tb off" aria-label="Section results"><svg viewBox="0 0 18 18"><path d="M5 2.500h7M5 9.500h7M8.500 2v8" stroke="#345" stroke-width="1.400"/><path d="M1 14h16" stroke="#444"/><path d="M2 14q3 4 6 0" fill="none" stroke="#22c" stroke-width="1.500"/><path d="M8 14q4-6 8 0" fill="none" stroke="#d22" stroke-width="1.500"/></svg></button>
    <button class="tb off" aria-label="Result windows"><svg viewBox="0 0 18 18"><path d="M1.500 1.500h7v4h-7zM9.500 1.500h7v4h-7zM1.500 7h7v4h-7zM9.500 7h7v4h-7zM1.500 12.500h7v4h-7zM9.500 12.500h7v4h-7z" fill="#fff" stroke="#555"/><path d="M2 2.500h6M10 2.500h6M2 8h6M10 8h6M2 13.500h6M10 13.500h6" stroke="#3a55c0" stroke-width="1.200"/><path d="M3 4.500h3M11 10h3M3 15.500h3" stroke="#c44"/></svg></button>
    <span class="sep"></span>
    <button class="tb off" aria-label="Panel"><svg viewBox="0 0 18 18"><path d="M3.500 1.500h10v13h-10z" fill="#fff" stroke="#444"/><path d="M3.500 2.500h10" stroke="#556" stroke-width="2"/><path d="M4.500 5.500h3" stroke="#d22" stroke-width="2"/><path d="M4.500 7.500h3" stroke="#dc3" stroke-width="2"/><path d="M4.500 9.500h3" stroke="#3a3" stroke-width="2"/><path d="M4.500 11.500h3" stroke="#33c" stroke-width="2"/><path d="M8.500 6.500h7v10h-7z" fill="#fff" stroke="#555"/><path d="M10 9h4M10 11h4M10 13h4" stroke="#777"/></svg></button>
  </div>
</div>

<main class="workspace">
  <svg class="model" viewBox="2 100 1105 540" preserveAspectRatio="xMinYMin slice" role="img" aria-label="Steel hall model">
    <g class="brace">
      <path d="M53 376L121 503M108 363L53 516M85 354L382 309M115 345l6-15M128 330l49 23M252 318l55 25M307 343l178 12M382 309l42 59M431 207l54 100M485 198l-54 148M438 393l47 1M180 352l70-14"/>
    </g>
    <g class="post">
      <path d="M38 361h15v177H38zM113 328h15v176h-15zM189 294h15v176h-15zM265 260h15v176h-15zM340 226h15v176h-15zM416 192h15v176h-15z"/>
    </g>
    <path class="post-edge" d="M40.500 362v175M50.500 362v175M115.500 329v174M126.500 329v174M191.500 295v174M201.500 295v174M267.500 261v174M277.500 261v174M342.500 227v174M353.500 227v174M418.500 193v174M428.500 193v174"/>
    <path class="purlin-edge" d="M45 361l76-33 76-34 75-34 76-34 76-34 61-27"/>
    <path class="purlin" d="M45 361l76-33 76-34 75-34 76-34 76-34 61-27"/>
    <g class="beam">
      <path d="M430 187l55-5v11l-55 7z"/>
      <path d="M354 220l131-9v11l-131 12z"/>
      <path d="M278 254l207-15v11l-207 18z"/>
      <path d="M203 288l255-18 27 9v11l-27-9-255 21z"/>
      <path d="M127 322l256-18 102 34v14L383 315l-256 20z"/>
      <path d="M52 357l255-18 178 64v10L307 350 52 366z"/>
      <path d="M592 147l170-12 36 12z"/>
    </g>
    <path class="beam-low" d="M430 200l55-7M354 234l131-12M278 268l207-18M203 302l255-21 27 9M127 335l256-20 102 37M52 366l255-16 178 63"/>
    <path class="beam-top" d="M430 187l55-5M354 220l131-9M278 254l207-15M203 288l255-18 27 9M127 322l256-18 102 34M52 357l255-18 178 64M592 147l170-12 36 12M430 187v13M354 220v14M278 254v14M203 288v14M127 322v13M52 357v9"/>
    <path class="purlin-edge" d="M190 346l62-28 75-35 76-33 75-34M307 343l76-36 75-33 27-12M443 389l42-19"/>
    <path class="purlin" d="M190 345l62-28 75-35 76-33 75-34M307 342l76-36 75-33 27-12M443 388l42-19"/>
    <path class="brace" d="M177 352l-49-22M85 354l88-14 209-31M743 147l19-8 19 8"/>
    <path class="beam-face" d="M173 356h8v201h-8zM434 396h8v201h-8z"/>
    <path class="post-edge" d="M174.500 357v199M440.500 397v199M180.500 357v199M434.500 397v199"/>
    <path class="tip" d="M43 361h10M119 328l8 4M195 294l8 3M270 260l8 3M346 226l8 3M422 192l8 3"/>
    <path class="selected" d="M307.500 350v129M307.500 496v80"/>
    <text class="member-no" x="300" y="491">57</text>
    <g>
      <use href="#support" x="46" y="542"/><use href="#support" x="122" y="508"/><use href="#support" x="197" y="474"/><use href="#support" x="272" y="440"/><use href="#support" x="348" y="406"/><use href="#support" x="424" y="373"/>
      <path d="M174 565h5v10h-5zM305 585h5v10h-5zM436 604h5v10h-5z" fill="#5fff66"/>
      <use href="#support" x="177" y="562"/><use href="#support" x="307" y="581"/><use href="#support" x="438" y="601"/>
    </g>
    <g>
      <use href="#node" x="46" y="362"/><use href="#node" x="173" y="325"/><use href="#node" x="177" y="352"/><use href="#node" x="249" y="290"/><use href="#node" x="325" y="257"/><use href="#node" x="400" y="223"/><use href="#node" x="476" y="189"/><use href="#node" x="307" y="343"/><use href="#node" x="438" y="391"/><use href="#node" x="122" y="328"/><use href="#node" x="349" y="226"/>
    </g>
    <circle class="hinge" cx="177" cy="357" r="2.500"/><circle class="hinge" cx="438" cy="396" r="2.500"/><circle class="hinge" cx="761" cy="144" r="2.500"/>
    <circle cx="307.500" cy="347" r="2.800" fill="#fff" stroke="#f77"/>
    <path d="M472 342l2.500 3 2.500-3M474.500 345v4" stroke="#19e32c" stroke-width="1.500" fill="none"/><path d="M477 342l8-4v5z" fill="#12a81f"/>
  </svg>
  <p class="mode">Visibility mode</p>
</main>
<footer class="statusbar"></footer>

<section class="dialog" role="dialog" aria-labelledby="dlg-title">
  <div class="dlg-title"><h2 id="dlg-title">Edit Member</h2><button class="close" aria-label="Close"><svg viewBox="0 0 12 12"><path d="M1 1l10 10M11 1L1 11" stroke="#111" stroke-width="1.200"/></svg></button></div>
  <div class="tabs" role="tablist"><button class="tab active" role="tab" aria-selected="true">General</button><button class="tab" role="tab">Options</button><button class="tab" role="tab">Effective Lengths</button></div>
  <form class="panel">
    <div class="columns">
      <div class="col">
        <div class="split">
          <section class="group"><h3><label for="no">Member No.</label></h3><div class="rows"><input class="member-input" id="no" value="57" readonly></div></section>
          <section class="group empty"></section>
        </div>
        <section class="group"><h3>Node No.</h3>
          <div class="rows">
            <div class="row"><label for="n1">Member start:</label><span class="picker num"><select id="n1"><option>64</option></select><svg viewBox="0 0 10 6"><use href="#chev"/></svg></span><button type="button" class="ib" aria-label="Pick start node"><svg viewBox="0 0 18 18"><use href="#pick"/></svg></button><button type="button" class="ib" aria-label="New start node"><svg viewBox="0 0 18 18"><use href="#newwin"/></svg></button></div>
            <div class="row"><label for="n2">Member end:</label><span class="picker num"><select id="n2"><option>59</option></select><svg viewBox="0 0 10 6"><use href="#chev"/></svg></span><button type="button" class="ib" aria-label="Pick end node"><svg viewBox="0 0 18 18"><use href="#pick"/></svg></button><button type="button" class="ib" aria-label="New end node"><svg viewBox="0 0 18 18"><use href="#newwin"/></svg></button></div>
          </div>
        </section>
        <section class="group rotation"><h3>Member Rotation via</h3>
          <div class="rotrow"><label class="radio"><input type="radio" name="rot" checked disabled>Angle</label><label class="dim" for="beta">β:</label><span class="spin"><input id="beta" disabled><span class="updown"><svg viewBox="0 0 11 16"><path d="M0 8h11" stroke="#ccc"/><path d="M3 6h5L5.500 3zM3 10h5l-2.500 3z" fill="#444"/></svg></span><span class="updown"><svg viewBox="0 0 8 16"><path d="M2.500 5v6l3-3z" fill="#333"/></svg></span></span><span class="unit">[°]</span></div>
          <div class="rotrow"><label class="radio"><input type="radio" name="rot" disabled>Help node</label><label class="dim" for="hn">No.:</label><span class="picker num disabled"><select id="hn" disabled><option></option></select><svg viewBox="0 0 10 6"><use href="#chev"/></svg></span><button type="button" class="ib" disabled aria-label="Pick help node"><svg viewBox="0 0 18 18"><use href="#pick-off"/></svg></button><button type="button" class="ib" disabled aria-label="New help node"><svg viewBox="0 0 18 18"><use href="#newwin-off"/></svg></button></div>
          <div class="plane"><span class="dim plane-label">In plane:</span><div class="plane-opts"><label class="radio"><input type="radio" name="plane" checked disabled>x-y</label><label class="radio"><input type="radio" name="plane" disabled>x-z</label></div><button type="button" class="ib" disabled aria-label="Rotation info"><svg viewBox="0 0 18 18"><use href="#info-off"/></svg></button></div>
        </section>
      </div>
      <div class="col">
        <section class="group"><h3><label for="mt">Member Type</label></h3><div class="rows typerow"><span class="picker type"><i class="swatch"></i><select id="mt"><option>Null</option></select><svg viewBox="0 0 10 6"><use href="#chev"/></svg></span><button type="button" class="ib" disabled aria-label="Edit member type"><svg viewBox="0 0 18 18"><use href="#editwin-off"/></svg></button></div></section>
        <div class="preview"></div>
      </div>
    </div>
    <section class="group"><h3>Cross-Section</h3>
      <div class="rows">
        <div class="row dim"><label for="c1">Member start:</label><span class="picker long disabled"><select id="c1" disabled><option>None</option></select><svg viewBox="0 0 10 6"><use href="#chev"/></svg></span><button type="button" class="ib" disabled aria-label="Library"><svg viewBox="0 0 18 18"><use href="#book-off"/></svg></button><button type="button" class="ib" disabled aria-label="New"><svg viewBox="0 0 18 18"><use href="#newwin-off"/></svg></button><button type="button" class="ib" disabled aria-label="Edit"><svg viewBox="0 0 18 18"><use href="#editwin-off"/></svg></button><button type="button" class="ib" disabled aria-label="Info"><svg viewBox="0 0 18 18"><use href="#info-off"/></svg></button></div>
        <div class="row dim"><label for="c2">Member end:</label><span class="picker long disabled"><select id="c2" disabled><option>None</option></select><svg viewBox="0 0 10 6"><use href="#chev"/></svg></span><button type="button" class="ib" disabled aria-label="Library"><svg viewBox="0 0 18 18"><use href="#book-off"/></svg></button><button type="button" class="ib" disabled aria-label="New"><svg viewBox="0 0 18 18"><use href="#newwin-off"/></svg></button><button type="button" class="ib" disabled aria-label="Edit"><svg viewBox="0 0 18 18"><use href="#editwin-off"/></svg></button><button type="button" class="ib" disabled aria-label="Info"><svg viewBox="0 0 18 18"><use href="#info-off"/></svg></button></div>
      </div>
    </section>
    <section class="group"><h3>Member Hinge</h3>
      <div class="rows">
        <div class="row dim"><label for="h1">Member start:</label><span class="picker long disabled"><select id="h1" disabled><option>None</option></select><svg viewBox="0 0 10 6"><use href="#chev"/></svg></span><button type="button" class="ib" disabled aria-label="New hinge"><svg viewBox="0 0 18 18"><use href="#newwin-off"/></svg></button><button type="button" class="ib" disabled aria-label="Edit hinge"><svg viewBox="0 0 18 18"><use href="#editwin-off"/></svg></button><span class="ib-space"></span><span class="ib-space"></span></div>
        <div class="row dim"><label for="h2">Member end:</label><span class="picker long disabled"><select id="h2" disabled><option>None</option></select><svg viewBox="0 0 10 6"><use href="#chev"/></svg></span><button type="button" class="ib" disabled aria-label="New hinge"><svg viewBox="0 0 18 18"><use href="#newwin-off"/></svg></button><button type="button" class="ib" disabled aria-label="Edit hinge"><svg viewBox="0 0 18 18"><use href="#editwin-off"/></svg></button><span class="ib-space"></span><span class="ib-space"></span></div>
      </div>
    </section>
  </form>
  <div class="actions">
    <button class="ib" aria-label="Help"><svg viewBox="0 0 18 18"><path d="M3 16l1-4a7 6.500 0 1 1 4 2.500z" fill="#eef2fb" stroke="#555c6e" stroke-width="1.200"/><path d="M6.500 6Q7 3.500 9.500 3.700q3 .5 2 2.800L9 9v1" fill="none" stroke="#1d3794" stroke-width="2"/><path d="M8 11h2v2H8z" fill="#1d3794"/></svg></button>
    <button class="ib" disabled aria-label="Comment"><svg viewBox="0 0 18 18"><path d="M2.500 2.500h11v13h-11z" fill="#e4e4dc" stroke="#77776f"/><path d="M4 6h7M4 8.500h5M4 11h4" stroke="#888"/><path d="M16 2l-6 9-1 3 3-1.500L17 5z" fill="#aaa" stroke="#66665e"/></svg></button>
    <button class="ib" aria-label="Units and decimal places"><svg viewBox="0 0 18 18"><path d="M1 1.500h16v4H1z" fill="#7fd07a" stroke="#3f8f3c"/><path d="M4.500 3v3M8 3v3M11.500 3v3M15 3v3" stroke="#2f6e2e"/><text class="dec" x="1" y="14">0.<tspan fill="#24409a">00</tspan></text><path d="M8 15.500h9" stroke="#24409a"/></svg></button>
    <button class="ib" aria-label="Pick member"><svg viewBox="0 0 18 18"><path d="M1.500 6.500h9v10h-9z" fill="#eee" stroke="#555"/><path d="M3 9h5M3 11.500h5M3 14h5" stroke="#777"/><path d="M6 1l7 4M12 0L8 6M6 5l7-4" stroke="#d33" stroke-width="1.700"/><path d="M10 4v10l2.300-2.200 1.800 4 1.900-1-1.800-4H17z" fill="#fff" stroke="#333"/></svg></button>
    <span class="spacer"></span>
    <button class="btn primary">OK</button><button class="btn">Cancel</button>
  </div>
</section>
</body>
</html>
```
FILE: styles.css
```
* { box-sizing: border-box; }
body {
  margin: 0;
  min-height: 100vh;
  display: flex;
  flex-direction: column;
  position: relative;
  background: #fff;
  color: #000;
  font-family: "Liberation Sans", Arial, sans-serif;
  font-size: 11px;
  line-height: 14px;
}
h1, h2, h3, p { margin: 0; font-weight: normal; font-size: inherit; }
button { font: inherit; color: inherit; padding: 0; border: 0; background: none; }
input, select { font: inherit; color: inherit; margin: 0; border-radius: 0; }
svg { display: block; }
.defs { position: absolute; width: 0; height: 0; }

.titlebar { height: 23px; flex: none; display: flex; align-items: center; gap: 4px; padding-left: 2px; }
.titlebar h1 { font: 11px/16px "Noto Sans", sans-serif; }
.app-icon { width: 17px; height: 17px; }

.menubar {
  height: 24px;
  flex: none;
  display: flex;
  align-items: center;
  background: #cfd4de;
  color: #3c4048;
  font-family: "Noto Sans", sans-serif;
  font-size: 11px;
}
.menubar button { margin-right: 15px; }
.menu-logo { width: 17px; height: 14px; margin-right: 10px; }
.grip {
  flex: none;
  width: 2px;
  height: 15px;
  margin: 0 4px;
  background: repeating-linear-gradient(#a9b0be 0 2px, #f2f5fa 2px 4px);
}

.toolrow { height: 26px; flex: none; display: flex; gap: 3px; background: #cfd4de; padding-bottom: 1px; }
.toolbar {
  display: flex;
  align-items: center;
  border-radius: 0 3px 3px 0;
  background: linear-gradient(#eef1f8, #d8dde8);
  border-bottom: 1px solid #bfc5d2;
}
.toolbar.grow { flex: 1; overflow: hidden; }
.tb { flex: none; width: 22px; height: 22px; display: grid; place-items: center; }
.tb.wide { width: 24px; }
.tb svg { width: 17px; height: 17px; }
.tb.on { background: #fde7a8; border: 1px solid #b09a68; }
.tb.hot { background: linear-gradient(#f9b060, #ffe98c); border: 1px solid #b09a68; }
.tb.off svg { opacity: .6; }
.drop { flex: none; width: 12px; height: 22px; display: grid; place-items: center; }
.drop svg { width: 8px; height: 8px; }
.sep { flex: none; width: 2px; height: 15px; margin: 0 3px; background: #b3b9c6; border-right: 1px solid #fff; }
.mini { font: 7px "Liberation Serif", serif; fill: #333; }
.glyph { font: bold 9px "Liberation Serif", serif; fill: #222; }
.axis { font: 11px "Liberation Serif", serif; fill: #222; }
.force { font: bold 9px "Liberation Sans", sans-serif; fill: #333; }
.dec { font: italic bold 9px "Liberation Serif", serif; }

.picker { position: relative; display: block; flex: none; }
.picker select { appearance: none; display: block; width: 100%; height: 21px; padding: 0 16px 0 2px; border: 1px solid #707070; background: #fff; }
.picker > svg { position: absolute; right: 4px; top: 8px; width: 10px; height: 6px; color: #444; pointer-events: none; }
.picker.lc { width: 154px; margin: 0 2px; }
.picker.lc select { height: 18px; border-color: #fff; font: 11px "Noto Sans", sans-serif; }
.lc-arrow { position: absolute; right: 1px; top: 1px; width: 14px; height: 16px; background: #dfe3ec; display: grid; place-items: center; pointer-events: none; }
.lc-arrow svg { width: 8px; height: 8px; }

.workspace { flex: 1; position: relative; overflow: hidden; border-top: 1px solid #666; border-left: 2px solid #777; }
.model { width: 100%; height: 100%; }
.mode { position: absolute; left: 5px; top: 6px; }
.statusbar { flex: none; height: 35px; }
.post, .beam, .beam-face { fill: #7070ff; }
.post-edge { stroke: #6262ee; fill: none; }
.beam-top { fill: none; stroke: #77778a; stroke-width: 2; stroke-dasharray: 1 1; }
.beam-low { fill: none; stroke: #5656c8; }
.purlin { fill: none; stroke: #6868f4; stroke-width: 2; }
.purlin-edge { fill: none; stroke: #4a4aa8; stroke-width: 3; }
.brace { fill: none; stroke: #7676dc; }
.tip { stroke: #333; stroke-width: 1; stroke-dasharray: 3 1; }
.selected { stroke: #ff7070; stroke-width: 2; stroke-dasharray: 1 1; }
.member-no { font: bold 10px "DejaVu Sans", sans-serif; fill: #e00000; }
.hinge { fill: #fff; stroke: #188080; }

.dialog {
  position: absolute;
  right: 0;
  top: 147px;
  width: 622px;
  background: #f0f0f0;
  border: 1px solid #44a5e6;
}
.dlg-title { height: 25px; display: flex; align-items: center; justify-content: space-between; background: #fff; padding: 0 9px 0 3px; }
.dlg-title h2 { font: 12px/16px Roboto, sans-serif; }
.close svg { width: 12px; height: 12px; }
.tabs { display: flex; align-items: flex-end; padding: 6px 6px 0; }
.tab { height: 18px; padding: 0 4px; border: 1px solid #d9d9d9; border-bottom: 0; border-left: 0; }
.tab.active { position: relative; height: 21px; margin-bottom: -1px; padding: 0 6px; background: #fff; border-left: 1px solid #d9d9d9; }
.panel { margin: 0 9px 0 6px; padding: 9px 5px 8px 8px; background: #fff; border: 1px solid #d9d9d9; display: flex; flex-direction: column; gap: 10px; }
.columns { display: grid; grid-template-columns: 300fr 284fr; gap: 7px; }
.col { display: flex; flex-direction: column; gap: 10px; min-width: 0; }
.split { display: grid; grid-template-columns: 109fr 183fr; gap: 8px; }
.group {
  padding-right: 1px;
  border-bottom: 1px solid #a9a5ec;
  border-left: 1px solid #dce5f4;
  background:
    linear-gradient(#a9a5ec, #a9a5ec) 100% 10px / 1px 100% no-repeat,
    linear-gradient(#f0f3f9, #f0f3f9) 0 17px / 100% 100% no-repeat;
}
.group.empty { border-top: 1px solid #dce5f4; border-right: 1px solid #a9a5ec; background: #f0f3f9; }
.group h3 {
  height: 17px;
  line-height: 16px;
  padding-left: 1px;
  background: #dce5f4;
  border-bottom: 1px solid #fff;
  color: #1b4a78;
  clip-path: polygon(0 0, calc(100% - 10px) 0, 100% 10px, 100% 100%, 0 100%);
}
.rows { display: flex; flex-direction: column; gap: 3px; padding: 3px 2px 3px 2px; }
.row { display: flex; align-items: center; gap: 5px; }
.row label { width: 73px; flex: none; }
.dim, .unit { color: #8c8c8c; }
.dim label { color: #9a9a9a; }
.member-input { width: 46px; height: 21px; text-align: right; padding: 0 3px; border: 1px solid #707070; background: #f0f0f0; }
.num { width: 63px; }
.long { flex: 1; }
.picker.disabled select { border-color: #c8c8c8; color: #6d6d6d; opacity: 1; }
.picker.disabled > svg { color: #a8a8a8; }
.picker.long.disabled select { background: #fff linear-gradient(#efefef, #efefef) 2px 2px / calc(100% - 21px) calc(100% - 4px) no-repeat; }
.ib { flex: none; width: 25px; height: 21px; display: grid; place-items: center; background: #e1e1e1; border: 1px solid #adadad; }
.ib:disabled { background: #ccc; border-color: #bfbfbf; }
.ib svg { width: 17px; height: 17px; }
.ib-space { width: 25px; }
.typerow { flex-direction: row; gap: 5px; padding-right: 32px; }
.type { flex: 1; outline: 3px solid #fa4343; outline-offset: 1px; }
.type select { padding-left: 19px; }
.swatch { position: absolute; left: 3px; top: 4px; width: 13px; height: 13px; background: #969696; border: 1px solid #333; }
.preview { flex: 1; border-top: 1px solid #8c8c8c; border-left: 1px solid #8c8c8c; }
.rotation { padding-bottom: 2px; }
.rotrow { height: 21px; margin-top: 5px; padding-left: 2px; display: flex; align-items: center; gap: 5px; }
.rotrow + .rotrow { margin-top: 10px; }
.radio { display: flex; align-items: center; gap: 2px; color: #6d6d6d; }
.radio input { appearance: none; width: 13px; height: 13px; border: 1px solid #c4c4c4; border-radius: 50%; background: #fff; }
.radio input:checked { background: radial-gradient(circle, #c4c4c4 0 4px, #fff 5px); }
.rotrow .radio { width: 85px; }
.rotrow .dim { width: 22px; }
.spin { display: flex; width: 83px; height: 20px; background: #f0f0f0; border: 1px solid #7a98b8; }
.spin input { flex: 1; min-width: 0; border: 0; background: none; }
.updown { border: 1px solid #ccc; margin: 1px 1px 1px 0; }
.updown svg { height: 14px; }
.plane { display: flex; align-items: flex-end; margin-top: 7px; padding: 0 2px 1px 18px; }
.plane-label { width: 74px; align-self: flex-start; line-height: 19px; }
.plane-opts { flex: 1; }
.plane-opts .radio { height: 19px; padding-left: 1px; }
.actions { display: flex; align-items: center; gap: 10px; padding: 11px 7px 6px 7px; }
.spacer { flex: 1; }
.btn { width: 73px; height: 21px; background: #e1e1e1; border: 1px solid #adadad; font: 12px Roboto, sans-serif; }
.btn.primary { border: 2px solid #0078d7; }
```
